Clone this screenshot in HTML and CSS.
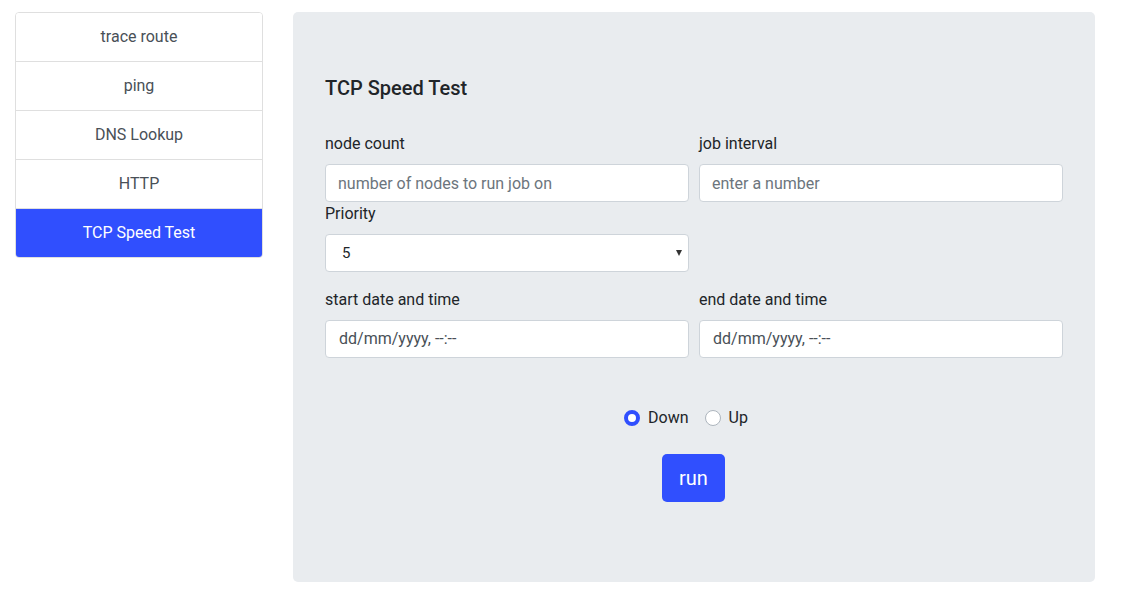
FILE: index.html
```html
<!DOCTYPE html>
<html>
<head>
<meta charset="utf-8">
<link rel="stylesheet" href="styles.css">
</head>
<body>
<div class="page">
  <nav class="list">
    <a class="item">trace route</a>
    <a class="item">ping</a>
    <a class="item">DNS Lookup</a>
    <a class="item">HTTP</a>
    <a class="item active">TCP Speed Test</a>
  </nav>
  <main class="panel">
    <h5 class="title">TCP Speed Test</h5>
    <div class="grid">
      <div class="field">
        <label>node count</label>
        <input class="control" type="text" placeholder="number of nodes to run job on">
      </div>
      <div class="field">
        <label>job interval</label>
        <input class="control" type="text" placeholder="enter a number">
      </div>
      <div class="field">
        <label>Priority</label>
        <div class="select control"><span>5</span><span class="caret"></span></div>
      </div>
      <div></div>
      <div class="field gap-top">
        <label>start date and time</label>
        <div class="control date">dd/mm/yyyy, --:--</div>
      </div>
      <div class="field gap-top">
        <label>end date and time</label>
        <div class="control date">dd/mm/yyyy, --:--</div>
      </div>
    </div>
    <div class="radios">
      <span class="radio"><span class="dot on"></span>Down</span>
      <span class="radio"><span class="dot"></span>Up</span>
    </div>
    <div class="actions"><button class="btn">run</button></div>
  </main>
</div>
</body>
</html>
```
FILE: styles.css
```css
* { box-sizing: border-box; }
body {
  margin: 0;
  font-family: Roboto, "Liberation Sans", sans-serif;
  font-size: 16px;
  line-height: 24px;
  color: #212529;
  background: #fff;
}
.page {
  display: flex;
  align-items: flex-start;
  padding: 12px 0 0 15px;
  gap: 30px;
}
.list {
  width: 248px;
  display: flex;
  flex-direction: column;
  border: 1px solid #dfdfdf;
  border-radius: 4px;
  overflow: hidden;
}
.item {
  display: block;
  text-align: center;
  padding: 12px 20px;
  color: #495057;
  background: #fff;
  border-bottom: 1px solid #dfdfdf;
}
.item.active {
  background: #304ffe;
  color: #fff;
  border-bottom: none;
  margin: 0 -1px -1px;
  padding-bottom: 13px;
}
.panel {
  width: 802px;
  height: 570px;
  background: #e9ecef;
  border-radius: 5px;
  padding: 64px 32px;
}
.title {
  margin: 0 0 32px;
  font-size: 20px;
  line-height: 24px;
  font-weight: 500;
  color: #212529;
}
.grid {
  display: grid;
  grid-template-columns: 364px 364px;
  column-gap: 10px;
}
.field { display: flex; flex-direction: column; }
.field label { display: block; margin-bottom: 8px; color: #212529; }
.gap-top { margin-top: 16px; }
.control {
  height: 38px;
  border: 1px solid #ced4da;
  border-radius: 4px;
  background: #fff;
  padding: 6px 12px;
  font-family: Roboto, "Liberation Sans", sans-serif;
  font-size: 16px;
  line-height: 24px;
  color: #495057;
  outline: none;
}
.control::placeholder { color: #6c757d; }
.select {
  display: flex;
  justify-content: space-between;
  align-items: center;
  padding: 6px 6px 6px 16px;
  color: #212529;
  font-size: 15px;
}
.caret {
  width: 0; height: 0;
  border-left: 3.5px solid transparent;
  border-right: 3.5px solid transparent;
  border-top: 6px solid #333;
}
.date { color: #495057; padding-left: 13px; }
.radios {
  display: flex;
  justify-content: center;
  margin-top: 48px;
}
.radio { display: flex; align-items: center; gap: 8px; margin-right: 16px; color: #212529; }
.dot {
  width: 16px; height: 16px;
  border-radius: 50%;
  border: 1px solid #adb5bd;
  background: #fff;
}
.dot.on {
  border: 4.5px solid #304ffe;
  background: #fff;
}
.actions { display: flex; justify-content: center; margin-top: 24px; }
.btn {
  width: 63px;
  height: 48px;
  padding: 0;
  margin-left: -1px;
  border: none;
  border-radius: 5px;
  background: #304ffe;
  color: #fff;
  font-family: Roboto, "Liberation Sans", sans-serif;
  font-size: 20px;
  line-height: 30px;
}
```
